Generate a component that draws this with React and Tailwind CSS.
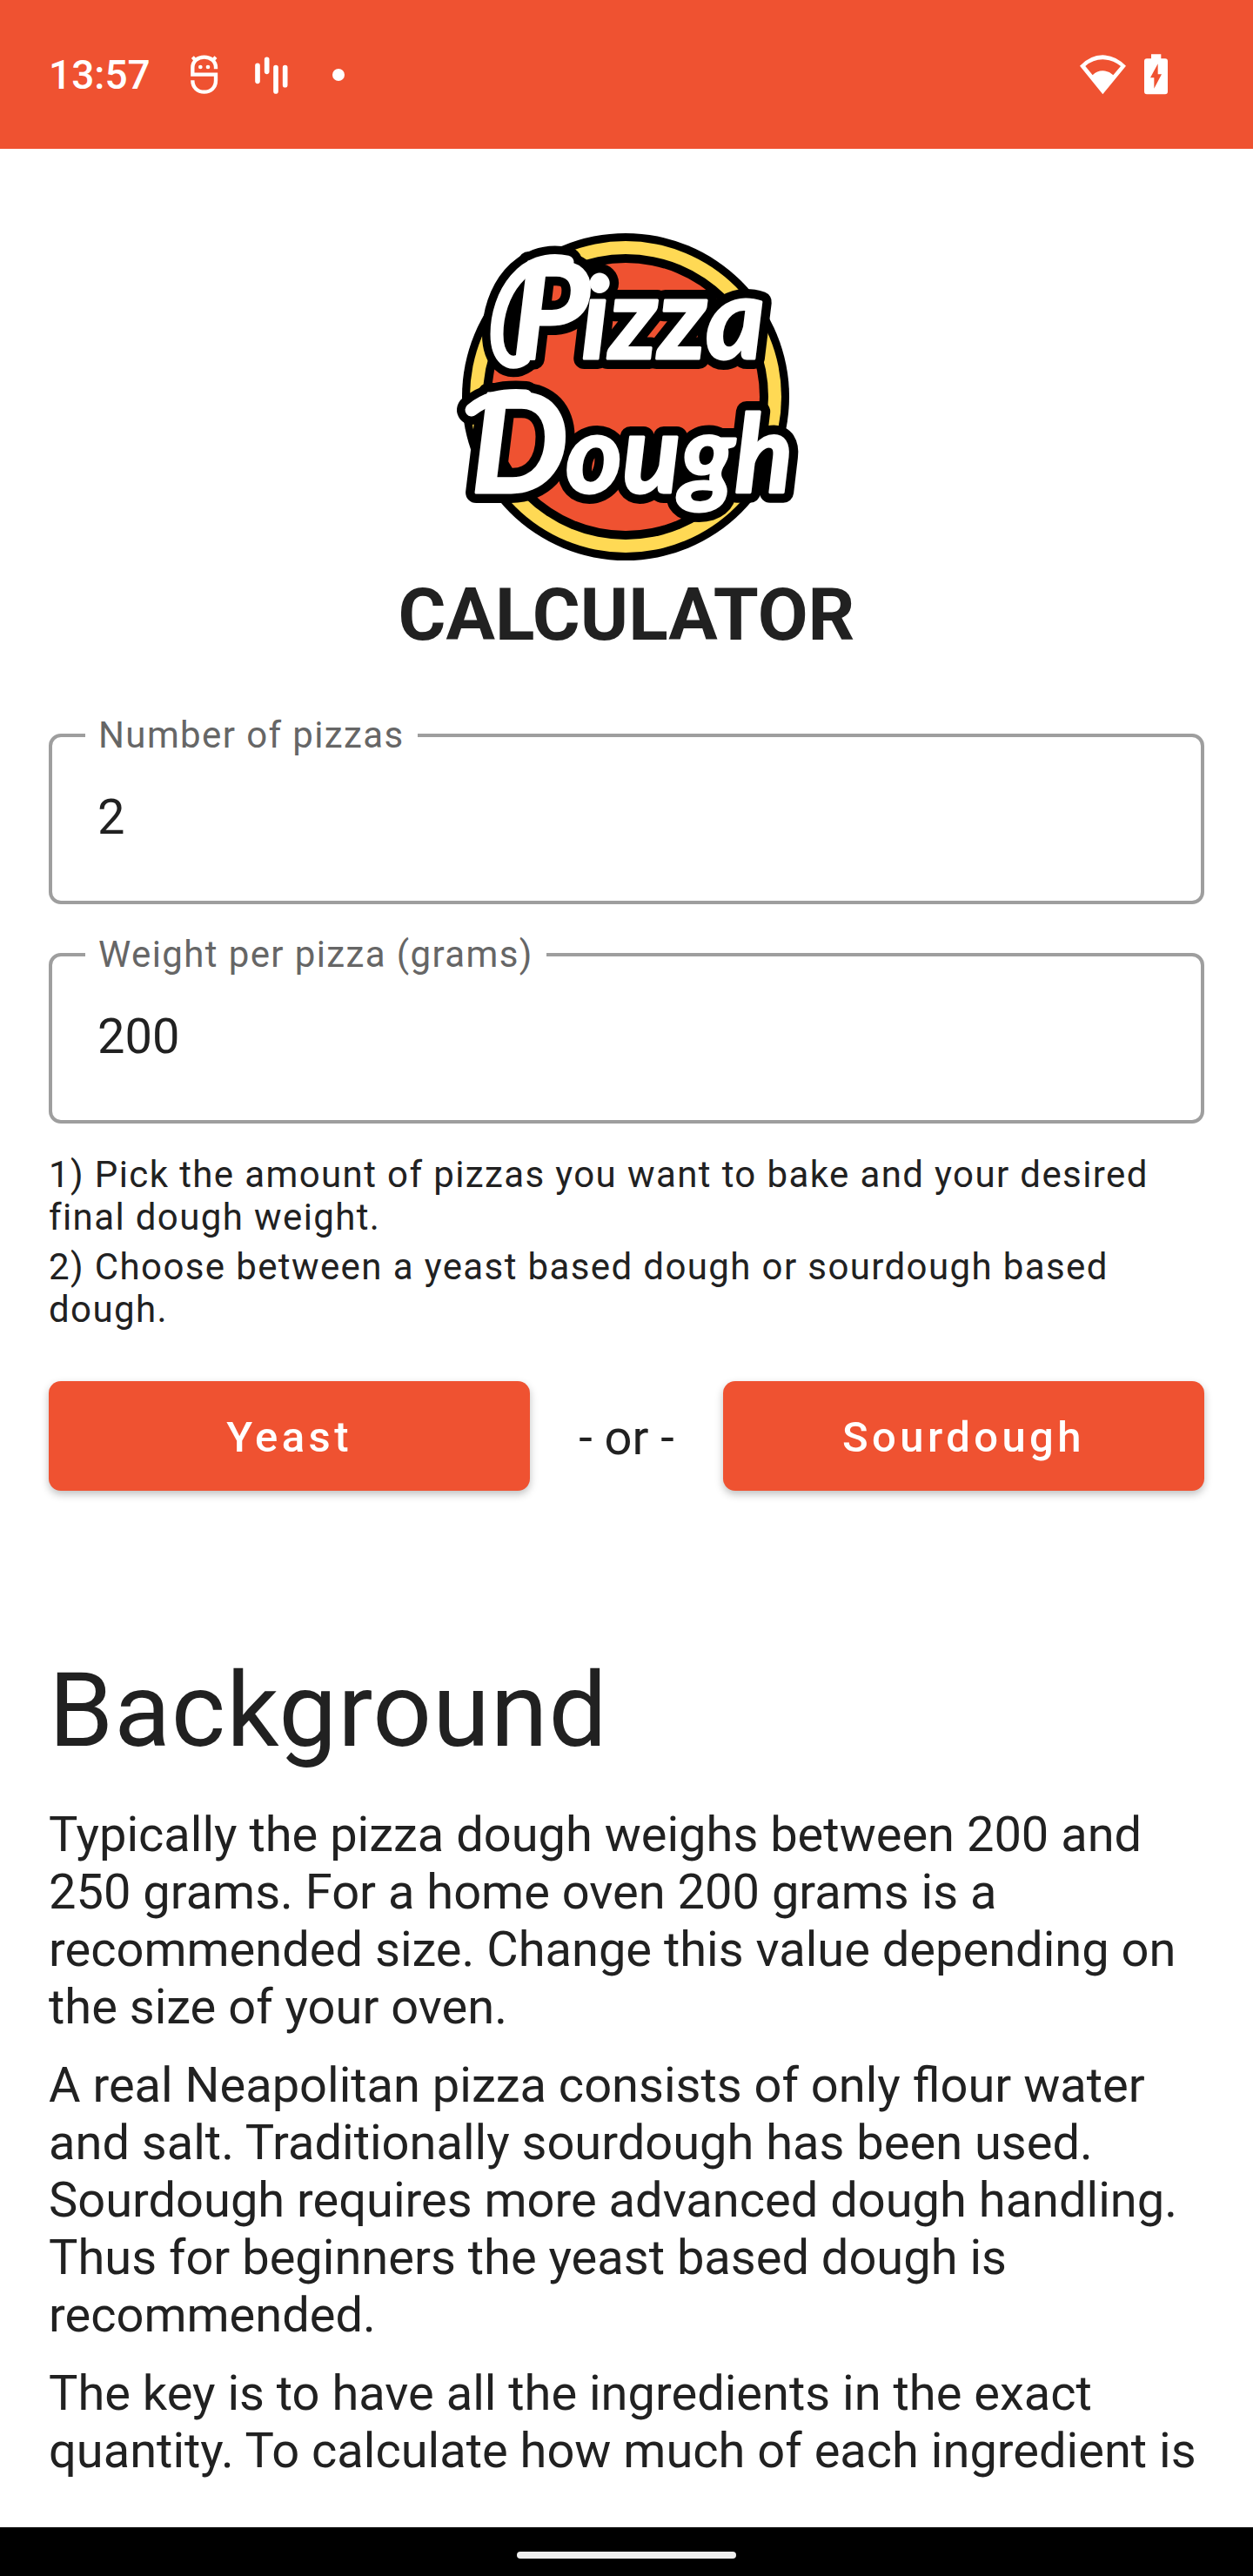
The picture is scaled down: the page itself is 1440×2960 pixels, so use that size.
import { useState } from "react";

function RobotIcon() {
  return (
    <svg className="h-[47px] w-[37px]" viewBox="650 185 111 141" fill="none" stroke="white" strokeWidth="13" aria-hidden="true">
      <path d="M743 237V232C743 210 725 196 703 196S663 210 663 232V256H743V276C743 302 725 316 703 316S663 302 663 276" />
      <path d="M663 196L674 208M743 196L732 208" strokeWidth="12" />
      <circle cx="690" cy="230" r="7" fill="white" stroke="none" />
      <circle cx="716" cy="230" r="7" fill="white" stroke="none" />
    </svg>
  );
}

function BarsIcon() {
  return (
    <svg className="h-[47px] w-[44px]" viewBox="870 185 132 141" stroke="white" strokeWidth="17" strokeLinecap="round" aria-hidden="true">
      <path d="M888 225V279M920 204V246M951 232V314M983 232V292" />
    </svg>
  );
}

function WifiIcon() {
  return (
    <svg className="h-[47px] w-[55px]" viewBox="240 185 165 141" aria-hidden="true">
      <path
        fill="white"
        fillRule="evenodd"
        d="M243 226Q279 189 322 189T402 226L322 324ZM262 227L287 258Q302 243 322 243T358 258L384 227Q356 204 322 204T262 227Z"
      />
    </svg>
  );
}

function BatteryIcon() {
  return (
    <svg className="h-[47px] w-[27px]" viewBox="465 185 81 141" aria-hidden="true">
      <path
        fill="white"
        fillRule="evenodd"
        d="M489 186H523V201H537Q546 201 546 210V315Q546 324 537 324H474Q465 324 465 315V210Q465 201 474 201H489ZM512 219L486 267H499V304L525 255H512Z"
      />
    </svg>
  );
}

function Logo() {
  return (
    <svg className="h-[390px] w-[400px] overflow-visible" viewBox="520 260 400 390" role="img" aria-label="Pizza Dough">
      <defs>
        <g id="lettering" className="font-['Lato'] font-bold italic" strokeLinejoin="round">
          <text x="588" y="412" fontSize="154">P<tspan x="668" fontSize="130">izza</tspan></text>
          <text x="541" y="566" fontSize="158">D<tspan x="650" fontSize="124">ough</tspan></text>
        </g>
        <g id="flourishes" fill="none" strokeLinecap="round">
          <path d="M652 301C602 290 571 338 571 384C571 410 585 424 602 412" />
          <path d="M542 471C558 458 576 453 604 455" />
        </g>
      </defs>
      <circle cx="719" cy="456" r="188" fill="black" />
      <circle cx="719" cy="456" r="179" fill="#ffd954" />
      <circle cx="719" cy="456" r="164" fill="black" />
      <circle cx="719" cy="456" r="154" fill="#ef5231" />
      <use href="#lettering" fill="black" stroke="black" strokeWidth="24" />
      <use href="#flourishes" stroke="black" strokeWidth="34" />
      <use href="#lettering" fill="white" stroke="white" strokeWidth="3" />
      <use href="#flourishes" stroke="white" strokeWidth="15" />
    </svg>
  );
}

function Field({ id, label, value, onChange }) {
  return (
    <fieldset className="rounded-[14px] border-4 border-[#9e9e9e]">
      <legend className="ml-[38px] px-[15px] text-[42px] leading-[50px] tracking-[0.033em] text-[#666666]">
        <label htmlFor={id}>{label}</label>
      </legend>
      <input
        id={id}
        inputMode="numeric"
        value={value}
        onChange={(e) => onChange(e.target.value)}
        className="block h-[165px] w-full bg-transparent px-[52px] pb-7 text-[56px] outline-none"
      />
    </fieldset>
  );
}

const buttonClass =
  "h-[126px] flex-1 rounded-[14px] bg-[#ef5231] pt-1 text-[49px] font-medium tracking-[0.09em] text-white shadow-[0_4px_10px_rgba(0,0,0,0.25)]";

export default function App() {
  const [count, setCount] = useState("2");
  const [weight, setWeight] = useState("200");

  return (
    <div className="flex min-h-screen flex-col bg-white font-['Roboto',sans-serif] text-[#212121]">
      <header className="flex h-[171px] items-center bg-[#ef5231] pr-[98px] pl-14 text-white">
        <time className="text-[46px] leading-none font-medium">13:57</time>
        <div className="ml-11 flex items-center">
          <RobotIcon />
          <div className="ml-9"><BarsIcon /></div>
          <div className="ml-12 size-3.5 rounded-full bg-white" />
        </div>
        <div className="ml-auto flex items-center gap-5">
          <WifiIcon />
          <BatteryIcon />
        </div>
      </header>

      <main className="flex-1 px-14 pt-[89px]">
        <div className="flex flex-col items-center">
          <Logo />
          <h1 className="mt-2 text-[84px] leading-[98px] font-bold">CALCULATOR</h1>
        </div>

        <form className="mt-16" onSubmit={(e) => e.preventDefault()}>
          <div className="flex flex-col gap-[33px]">
            <Field id="count" label="Number of pizzas" value={count} onChange={setCount} />
            <Field id="weight" label="Weight per pizza (grams)" value={weight} onChange={setWeight} />
          </div>
          <div className="mt-[34px] flex flex-col gap-2 text-[42px] leading-[49px] tracking-[0.033em]">
            <p>1) Pick the amount of pizzas you want to bake and your desired final dough weight.</p>
            <p>2) Choose between a yeast based dough or sourdough based dough.</p>
          </div>
          <div className="mt-[58px] flex items-center">
            <button type="button" className={buttonClass}>Yeast</button>
            <span className="px-14 pt-1 text-[56px] leading-[66px]">- or -</span>
            <button type="button" className={buttonClass}>Sourdough</button>
          </div>
        </form>

        <section className="mt-[183px]">
          <h2 className="text-[119px] leading-[139px] tracking-[1px]">Background</h2>
          <div className="mt-10 flex flex-col gap-6 text-[56px] leading-[66px]">
            <p>
              Typically the pizza dough weighs between 200 and 250 grams. For a home oven 200 grams is a
              recommended size. Change this value depending on the size of your oven.
            </p>
            <p>
              A real Neapolitan pizza consists of only flour water and salt. Traditionally sourdough has been
              used. Sourdough requires more advanced dough handling. Thus for beginners the yeast based dough is
              recommended.
            </p>
            <p>The key is to have all the ingredients in the exact quantity. To calculate how much of each ingredient is</p>
          </div>
        </section>
      </main>

      <footer className="flex h-14 items-center justify-center bg-black pt-2">
        <div className="h-2 w-[252px] rounded-full bg-[#eeeeee]" />
      </footer>
    </div>
  );
}
